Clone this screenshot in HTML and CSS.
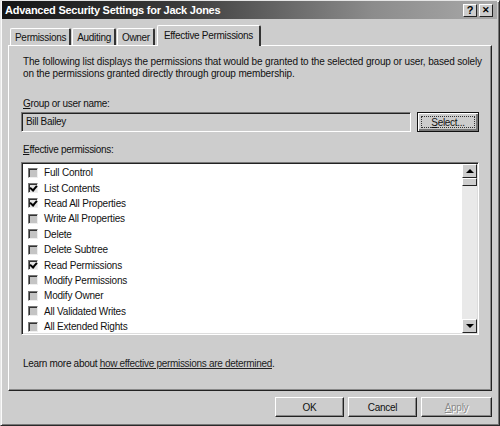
FILE: index.html
```html
<!DOCTYPE html>
<html lang="en">
<head>
    <meta charset="UTF-8">
    <title>Advanced Security Settings for Jack Jones</title>
    <link rel="stylesheet" href="styles.css">
</head>
<body>
    <div class="window">
        <div class="titlebar">
            <span class="title">Advanced Security Settings for Jack Jones</span>
            <div class="caption-buttons">
                <span class="caption-btn">?</span>
                <span class="caption-btn close">&#x2715;</span>
            </div>
        </div>

        <div class="main">
            <div class="tabs">
                <div class="tab">Permissions</div>
                <div class="tab">Auditing</div>
                <div class="tab">Owner</div>
                <div class="tab active">Effective Permissions</div>
            </div>

            <div class="panel">
                <p class="desc">The following list displays the permissions that would be granted to the selected group or user, based solely on the permissions granted directly through group membership.</p>

                <label class="field-label"><u>G</u>roup or user name:</label>
                <div class="user-row">
                    <div class="user-input">Bill Bailey</div>
                    <button class="btn default"><span class="focus"><u>S</u>elect...</span></button>
                </div>

                <label class="field-label list-label"><u>E</u>ffective permissions:</label>
                <div class="listbox">
                    <ul class="perm-list">
                        <li><span class="check"></span>Full Control</li>
                        <li><span class="check on"></span>List Contents</li>
                        <li><span class="check on"></span>Read All Properties</li>
                        <li><span class="check"></span>Write All Properties</li>
                        <li><span class="check"></span>Delete</li>
                        <li><span class="check"></span>Delete Subtree</li>
                        <li><span class="check on"></span>Read Permissions</li>
                        <li><span class="check"></span>Modify Permissions</li>
                        <li><span class="check"></span>Modify Owner</li>
                        <li><span class="check"></span>All Validated Writes</li>
                        <li><span class="check"></span>All Extended Rights</li>
                    </ul>
                    <div class="scrollbar">
                        <div class="sb-btn"><span class="arrow up"></span></div>
                        <div class="sb-thumb"></div>
                        <div class="sb-track"></div>
                        <div class="sb-btn"><span class="arrow down"></span></div>
                    </div>
                </div>

                <p class="learn">Learn more about <a href="#">how effective permissions are determined</a>.</p>
            </div>

            <div class="footer">
                <button class="btn">OK</button>
                <button class="btn">Cancel</button>
                <button class="btn disabled"><u>A</u>pply</button>
            </div>
        </div>
    </div>
</body>
</html>
```

FILE: styles.css
```css
* {
    box-sizing: border-box;
}
body {
    margin: 0;
    width: 500px;
    height: 426px;
    overflow: hidden;
    background: #cdcdcd;
    font-family: "Liberation Sans", Arial, sans-serif;
    font-size: 10px;
    letter-spacing: -0.3px;
    color: #111;
}
.window {
    width: 500px;
    height: 426px;
    display: flex;
    flex-direction: column;
    border: 1px solid #e6e6e6;
    border-right-color: #2a2a2a;
    border-bottom-color: #2a2a2a;
    box-shadow: inset 1px 1px 0 #fafafa, inset -1px -1px 0 #777;
    padding: 0 2px 2px 1px;
}
.titlebar {
    height: 18px;
    display: flex;
    align-items: center;
    justify-content: space-between;
    padding: 0 4px 0 3px;
    background: linear-gradient(to right, #151515 0%, #3a3a3a 35%, #8c8c8c 75%, #a9a9a9 100%);
}
.title {
    font-weight: bold;
    font-size: 11px;
    letter-spacing: -0.25px;
    color: #fff;
}
.caption-buttons {
    display: flex;
    gap: 2px;
}
.caption-btn {
    width: 14px;
    height: 13px;
    display: flex;
    align-items: center;
    justify-content: center;
    background: #cdcdcd;
    border: 1px solid #fff;
    border-right-color: #222;
    border-bottom-color: #222;
    font-weight: bold;
    font-size: 11px;
    letter-spacing: 0;
    color: #000;
    line-height: 1;
}
.caption-btn.close {
    font-size: 9px;
}
.main {
    flex: 1;
    display: flex;
    flex-direction: column;
    padding: 6px 5px 0 6px;
}
.tabs {
    display: flex;
    align-items: flex-end;
    height: 20px;
    padding-left: 2px;
    position: relative;
    z-index: 1;
}
.tab {
    height: 17px;
    padding: 2px 3px 0 4px;
    margin-right: 1px;
    border: 1px solid #fff;
    border-bottom: none;
    border-right: 2px solid #333;
    border-radius: 2px 2px 0 0;
    background: #cdcdcd;
    line-height: 13px;
}
.tab.active {
    height: 21px;
    margin-bottom: -1px;
    margin-left: 1px;
    padding: 3px 6px 0 6px;
}
.panel {
    height: 346px;
    border: 1px solid #fff;
    border-right-color: #222;
    border-bottom-color: #222;
    box-shadow: inset -1px -1px 0 #888;
    padding: 10px 12px 0 12px;
}
.desc {
    margin: 0 -8px 0 2px;
    line-height: 12px;
    letter-spacing: -0.15px;
}
.field-label {
    display: block;
    margin: 18px 0 2px 2px;
    line-height: 12px;
}
.field-label.list-label {
    margin: 12px 0 6px 2px;
}
.user-row {
    display: flex;
    gap: 6px;
    height: 20px;
}
.user-input {
    flex: 1;
    border: 1px solid #777;
    border-right-color: #fff;
    border-bottom-color: #fff;
    box-shadow: inset 1px 1px 0 #222;
    padding: 3px 4px;
    line-height: 12px;
}
.btn {
    font: inherit;
    letter-spacing: inherit;
    color: #111;
    background: #cdcdcd;
    border: 1px solid #fff;
    border-right-color: #222;
    border-bottom-color: #222;
    box-shadow: inset -1px -1px 0 #888;
    padding: 0;
    height: 20px;
    width: 69px;
}
.btn.default {
    width: 62px;
    border: 1px solid #111;
    box-shadow: inset 1px 1px 0 #fff, inset -2px -2px 0 #777;
    padding: 3px;
}
.btn .focus {
    display: block;
    height: 100%;
    border: 1px dotted #333;
    line-height: 11px;
}
.btn.disabled {
    color: #8a8a8a;
    text-shadow: 1px 1px 0 #fff;
    width: 71px;
}
.listbox {
    display: flex;
    height: 173px;
    background: #fff;
    border: 1px solid #777;
    border-right-color: #fff;
    border-bottom-color: #fff;
    box-shadow: inset 1px 1px 0 #222, inset -1px -1px 0 #ddd;
    padding: 1px 1px 1px 2px;
}
.perm-list {
    flex: 1;
    list-style: none;
    margin: 0;
    padding: 1px 0 0 4px;
    letter-spacing: -0.2px;
}
.perm-list li {
    height: 15.4px;
    display: flex;
    align-items: center;
    gap: 6px;
}
.check {
    width: 10px;
    height: 10px;
    background: #c4c4c4;
    border: 1px solid #777;
    border-right-color: #eee;
    border-bottom-color: #eee;
    box-shadow: inset 1px 1px 0 #333;
    position: relative;
}
.check.on {
    background: #e4e4e4;
}
.check.on::after {
    content: "";
    position: absolute;
    left: 2px;
    top: 0px;
    width: 3px;
    height: 5px;
    border: solid #000;
    border-width: 0 2px 2px 0;
    transform: rotate(40deg);
}
.scrollbar {
    width: 15px;
    display: flex;
    flex-direction: column;
    background: #e9e9e9;
}
.sb-btn {
    height: 14px;
    display: flex;
    align-items: center;
    justify-content: center;
    background: #cdcdcd;
    border: 1px solid #fff;
    border-right-color: #222;
    border-bottom-color: #222;
}
.sb-thumb {
    height: 8px;
    background: #cdcdcd;
    border: 1px solid #fff;
    border-right-color: #222;
    border-bottom-color: #222;
}
.sb-track {
    flex: 1;
}
.arrow {
    width: 0;
    height: 0;
    border-left: 4px solid transparent;
    border-right: 4px solid transparent;
}
.arrow.up {
    border-bottom: 4px solid #000;
}
.arrow.down {
    border-top: 4px solid #000;
}
.learn {
    margin: 23px 0 0 2px;
    line-height: 12px;
}
.learn a {
    color: #222;
}
.footer {
    display: flex;
    justify-content: flex-end;
    gap: 4px;
    padding: 6px 0 0 0;
}
```
